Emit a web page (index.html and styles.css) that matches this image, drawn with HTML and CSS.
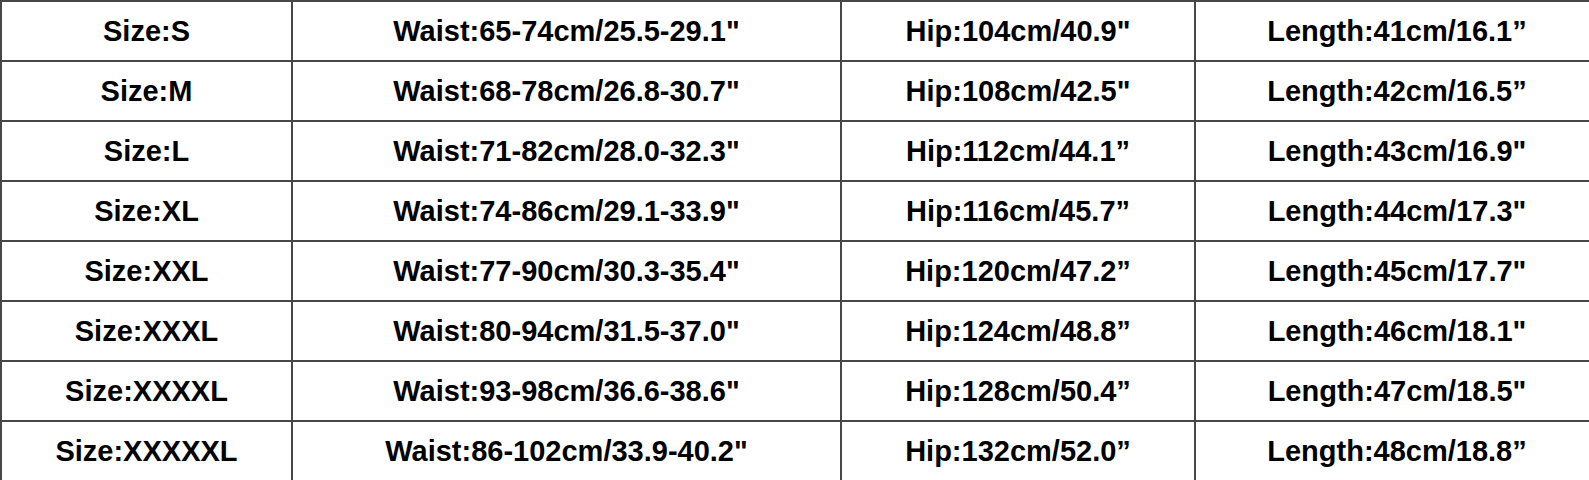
FILE: index.html
```html
<!DOCTYPE html>
<html>
<head>
<meta charset="utf-8">
<link rel="stylesheet" href="styles.css">
</head>
<body>
<div class="chart">
  <div class="cell">Size:S</div><div class="cell">Waist:65-74cm/25.5-29.1"</div><div class="cell">Hip:104cm/40.9"</div><div class="cell">Length:41cm/16.1”</div>
  <div class="cell">Size:M</div><div class="cell">Waist:68-78cm/26.8-30.7"</div><div class="cell">Hip:108cm/42.5"</div><div class="cell">Length:42cm/16.5”</div>
  <div class="cell">Size:L</div><div class="cell">Waist:71-82cm/28.0-32.3"</div><div class="cell">Hip:112cm/44.1”</div><div class="cell">Length:43cm/16.9"</div>
  <div class="cell">Size:XL</div><div class="cell">Waist:74-86cm/29.1-33.9"</div><div class="cell">Hip:116cm/45.7”</div><div class="cell">Length:44cm/17.3"</div>
  <div class="cell">Size:XXL</div><div class="cell">Waist:77-90cm/30.3-35.4"</div><div class="cell">Hip:120cm/47.2”</div><div class="cell">Length:45cm/17.7"</div>
  <div class="cell">Size:XXXL</div><div class="cell">Waist:80-94cm/31.5-37.0"</div><div class="cell">Hip:124cm/48.8”</div><div class="cell">Length:46cm/18.1"</div>
  <div class="cell">Size:XXXXL</div><div class="cell">Waist:93-98cm/36.6-38.6"</div><div class="cell">Hip:128cm/50.4”</div><div class="cell">Length:47cm/18.5"</div>
  <div class="cell">Size:XXXXXL</div><div class="cell">Waist:86-102cm/33.9-40.2"</div><div class="cell">Hip:132cm/52.0”</div><div class="cell">Length:48cm/18.8”</div>
</div>
</body>
</html>
```

FILE: styles.css
```css
html, body {
  margin: 0;
  padding: 0;
  background: #ffffff;
  overflow: hidden;
}

.chart {
  display: grid;
  grid-template-columns: 291px 549px 354px 404px;
  grid-auto-rows: 60px;
  width: 1598px;
  font-family: "Liberation Sans", Arial, sans-serif;
  font-weight: bold;
  font-size: 29px;
  color: #000000;
}

.cell {
  box-sizing: border-box;
  border-top: 2px solid #474747;
  border-left: 2px solid #474747;
  display: flex;
  align-items: center;
  justify-content: center;
  white-space: nowrap;
}
```
